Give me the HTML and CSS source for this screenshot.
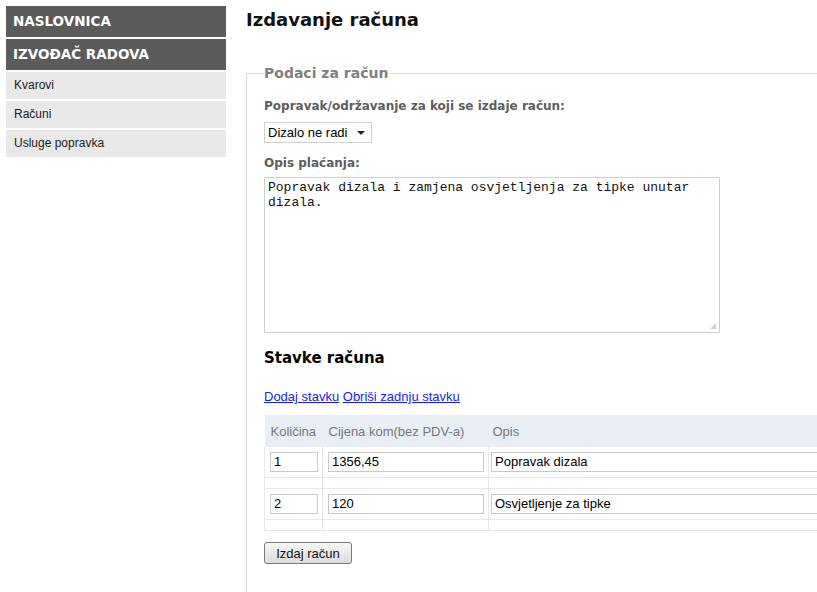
FILE: index.html
```html
<!DOCTYPE html>
<html>
<head>
<meta charset="utf-8">
<title>Izdavanje računa</title>
<link rel="stylesheet" href="styles.css">
</head>
<body>
<div class="page">
  <nav class="sidebar">
    <a class="nav-head" href="#">NASLOVNICA</a>
    <a class="nav-head" href="#">IZVOĐAČ RADOVA</a>
    <a class="nav-item" href="#">Kvarovi</a>
    <a class="nav-item" href="#">Računi</a>
    <a class="nav-item" href="#">Usluge popravka</a>
  </nav>
  <main class="main">
    <h1 class="title">Izdavanje računa</h1>
    <fieldset class="box">
      <legend class="legend">Podaci za račun</legend>
      <label class="label first">Popravak/održavanje za koji se izdaje račun:</label>
      <div class="select">Dizalo ne radi <span class="arrow"></span></div>
      <label class="label second">Opis plaćanja:</label>
      <div class="textarea">Popravak dizala i zamjena osvjetljenja za tipke unutar
dizala.<span class="grip"></span></div>
      <h2 class="subtitle">Stavke računa</h2>
      <div class="links"><a href="#">Dodaj stavku</a> <a href="#">Obriši zadnju stavku</a></div>
      <table class="items">
        <thead>
          <tr><th class="c1">Količina</th><th class="c2">Cijena kom(bez PDV-a)</th><th class="c3">Opis</th></tr>
        </thead>
        <tbody>
          <tr class="row"><td class="d1"><div class="inp w1">1</div></td><td class="d2"><div class="inp w2">1356,45</div></td><td class="d3"><div class="inp w3">Popravak dizala</div></td></tr>
          <tr class="spacer"><td></td><td></td><td></td></tr>
          <tr class="row"><td class="d1"><div class="inp w1">2</div></td><td class="d2"><div class="inp w2">120</div></td><td class="d3"><div class="inp w3">Osvjetljenje za tipke</div></td></tr>
          <tr class="spacer"><td></td><td></td><td></td></tr>
        </tbody>
      </table>
      <button class="btn">Izdaj račun</button>
    </fieldset>
  </main>
</div>
</body>
</html>
```

FILE: styles.css
```css
html, body {
  margin: 0;
  padding: 0;
  overflow: hidden;
  background: #fff;
}
body {
  font-family: "Liberation Sans", Arial, sans-serif;
  font-size: 13px;
  color: #000;
}
.page {
  display: flex;
  align-items: flex-start;
  gap: 20px;
  padding: 6px 0 0 6px;
  width: 1100px;
}
.sidebar {
  width: 220px;
  flex: none;
  display: flex;
  flex-direction: column;
}
.nav-head {
  display: block;
  background: #5b5b5b;
  color: #fff;
  font-family: "DejaVu Sans", Verdana, sans-serif;
  font-weight: bold;
  font-size: 13.5px;
  height: 31px;
  line-height: 31px;
  padding-left: 7px;
  text-decoration: none;
  margin-bottom: 2px;
}
.nav-item {
  display: block;
  background: #e8e8e8;
  color: #222;
  font-size: 12px;
  height: 27px;
  line-height: 27px;
  padding-left: 8px;
  text-decoration: none;
  margin-bottom: 2px;
}
.main {
  flex: 1;
}
.title {
  font-family: "DejaVu Sans", Verdana, sans-serif;
  font-size: 18px;
  font-weight: bold;
  margin: 3px 0 0 0;
  line-height: 22px;
  color: #111;
}
.box {
  margin: 34px 0 0 0;
  border: 1px solid #d6d6d6;
  border-right: none;
  padding: 0 0 40px 17px;
  width: 800px;
}
.legend {
  font-family: "DejaVu Sans", Verdana, sans-serif;
  font-weight: bold;
  font-size: 14px;
  color: #808080;
  padding: 0 1px;
  margin-left: -1px;
}
.label {
  display: block;
  font-family: "DejaVu Sans", Verdana, sans-serif;
  font-weight: bold;
  font-size: 12px;
  color: #5e5e5e;
  line-height: 16px;
  margin: 9px 0 8px 0;
}
.label.first {
  margin-top: 17px;
}
.label.second {
  margin-top: 12px;
  margin-bottom: 6px;
}
.select {
  display: flex;
  align-items: center;
  box-sizing: border-box;
  width: 108px;
  height: 21px;
  border: 1px solid #d0d0d0;
  padding-left: 3px;
  font-size: 13px;
  color: #000;
  gap: 9px;
}
.arrow {
  width: 0;
  height: 0;
  border-left: 4px solid transparent;
  border-right: 4px solid transparent;
  border-top: 4px solid #222;
}
.textarea {
  position: relative;
  box-sizing: border-box;
  width: 456px;
  height: 156px;
  border: 1px solid #cfcfcf;
  padding: 2px 3px;
  font-family: "Liberation Mono", "Courier New", monospace;
  font-size: 13px;
  line-height: 15px;
  white-space: pre-wrap;
  color: #111;
}
.grip {
  position: absolute;
  right: 3px;
  bottom: 3px;
  width: 6px;
  height: 6px;
  background:
    radial-gradient(circle, #999 0.6px, transparent 0.8px) 0 0 / 2px 2px;
  clip-path: polygon(100% 0, 100% 100%, 0 100%);
}
.subtitle {
  font-family: "DejaVu Sans", Verdana, sans-serif;
  font-size: 15px;
  font-weight: bold;
  margin: 16px 0 0 0;
  line-height: 18px;
}
.links {
  margin-top: 22px;
  font-size: 13px;
  line-height: 16px;
}
.links a {
  color: #1a1aff;
}
.items {
  margin-top: 10px;
  border-collapse: collapse;
  width: 780px;
  border-bottom: 1px solid #e6e6e6;
}
.items th {
  background: #e9eef4;
  font-weight: normal;
  color: #777;
  text-align: left;
  font-size: 13px;
  height: 32px;
  padding: 0 5px 0 6px;
}
.items th.c1 { width: 45px; }
.items th.c2 { width: 154px; }
.items th.c3 { padding-left: 4px; }
.items td {
  border-right: 1px solid #e8e8e8;
  padding: 0 4px 0 5px;
  height: 30px;
}
.items td.d1 { padding-left: 5px; }
.items td.d2 { padding-left: 5px; }
.items td.d3 { padding-left: 2px; }
.items td:first-child {
  border-left: 1px solid #e8e8e8;
}
.items tr.row td {
  height: 30px;
  border-bottom: 1px solid #e8e8e8;
}
.items tr.spacer td {
  height: 10px;
  border-bottom: 1px solid #e8e8e8;
}
.inp {
  box-sizing: border-box;
  height: 20px;
  border: 1px solid #c9c9c9;
  padding-left: 3px;
  line-height: 18px;
  font-size: 13px;
  color: #000;
}
.w1 { width: 48px; }
.w2 { width: 156px; }
.w3 { width: 360px; }
.btn {
  margin-top: 11px;
  width: 88px;
  height: 22px;
  border: 1px solid #7a7a7a;
  border-radius: 3px;
  background: linear-gradient(#f6f6f6, #dcdcdc);
  font-family: "Liberation Sans", Arial, sans-serif;
  font-size: 13px;
  color: #111;
  padding: 0;
}
```
